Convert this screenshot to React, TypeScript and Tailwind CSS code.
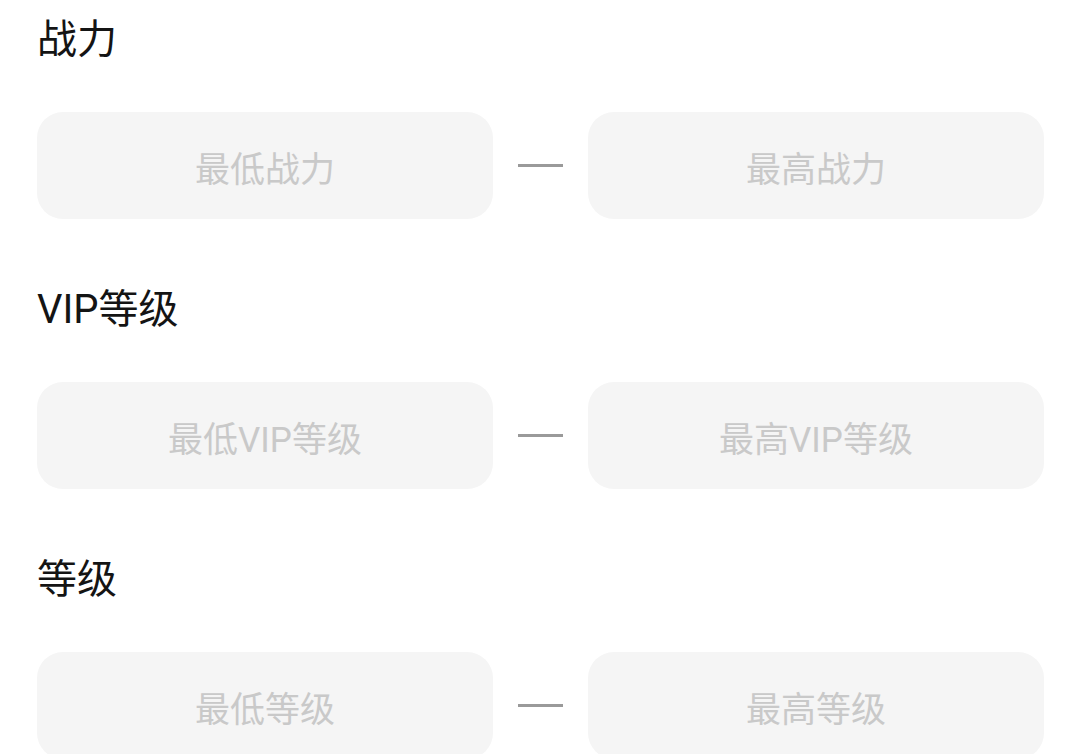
import { useState } from "react";

type RangeField = {
  readonly title: string;
  readonly minLabel: string;
  readonly maxLabel: string;
};

const FIELDS: readonly RangeField[] = [
  { title: "战力", minLabel: "最低战力", maxLabel: "最高战力" },
  { title: "VIP等级", minLabel: "最低VIP等级", maxLabel: "最高VIP等级" },
  { title: "等级", minLabel: "最低等级", maxLabel: "最高等级" },
];

const INPUT_CLASS =
  "h-[107px] w-[456px] rounded-[26px] bg-[#f5f5f5] pt-[10px] text-center text-[35px] text-[#333] outline-none placeholder:text-[#c9c9c9]" as const;

const RangeInput = ({ placeholder }: { readonly placeholder: string }) => {
  const [value, setValue] = useState("");
  return (
    <input
      type="text"
      inputMode="numeric"
      value={value}
      placeholder={placeholder}
      onChange={(event) => setValue(event.target.value)}
      className={INPUT_CLASS}
    />
  );
};

const RangeSection = ({ title, minLabel, maxLabel }: RangeField) => {
  return (
    <section className="flex flex-col">
      <h2 className="h-[40px] text-[40px] leading-[40px] font-normal text-[#141414]">{title}</h2>
      <div className="mt-[52px] flex items-center gap-[25px]">
        <RangeInput placeholder={minLabel} />
        <div className="h-[3px] w-[45px] bg-[#9a9a9a]" />
        <RangeInput placeholder={maxLabel} />
      </div>
    </section>
  );
};

export default function App() {
  return (
    <div
      className="flex min-h-screen flex-col gap-[71px] bg-white pt-[20px] pl-[37px]"
      style={{ fontFamily: 'Roboto, "Noto Sans CJK SC", "Noto Sans", sans-serif' }}
    >
      {FIELDS.map((field) => (
        <RangeSection key={field.title} {...field} />
      ))}
    </div>
  );
}
